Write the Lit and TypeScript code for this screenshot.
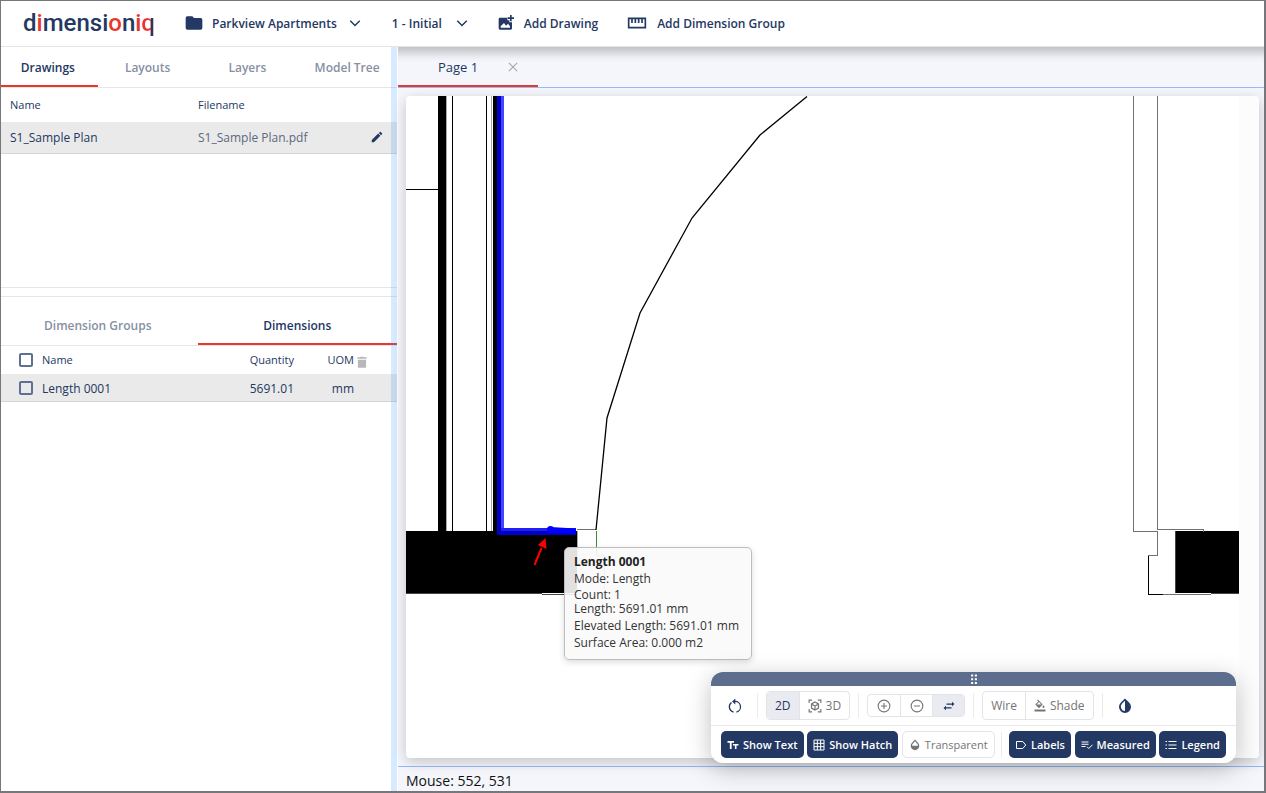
import { LitElement, html, css, svg } from "lit";
import { customElement, state } from "lit/decorators.js";

const shapes = {
  folder: svg`<path d="M10 4H4a2 2 0 0 0-2 2v12a2 2 0 0 0 2 2h16a2 2 0 0 0 2-2V8a2 2 0 0 0-2-2h-8z"/>`,
  chevron: svg`<path d="M2.500 7.500l9.500 9.500 9.500-9.500" fill="none" stroke="currentColor" stroke-width="3"/>`,
  addImage: svg`<path fill-rule="evenodd" d="M3 4h11v4h3v3h4v9a2 2 0 0 1-2 2H3a2 2 0 0 1-2-2V6a2 2 0 0 1 2-2zM4 19h14v-2l-3-4-3 3-3-4-5 5z"/><path d="M18 0h2.500v3.500H24V6h-3.500v3.500H18V6h-3.500V3.500H18z"/>`,
  ruler: svg`<path d="M2 6.500h20v11H2zM6 6v6M10 6v6M14 6v6M18 6v6" fill="none" stroke="currentColor" stroke-width="2"/>`,
  close: svg`<path d="M2 2l20 20M22 2L2 22" fill="none" stroke="currentColor" stroke-width="2.600"/>`,
  pencil: svg`<path d="M3 17.250V21h3.750L17.800 9.940l-3.750-3.750zM20.710 7.040a1 1 0 0 0 0-1.410l-2.340-2.340a1 1 0 0 0-1.410 0l-1.830 1.830 3.750 3.750z"/>`,
  trash: svg`<path d="M5 8h14v12a2 2 0 0 1-2 2H7a2 2 0 0 1-2-2zM15.500 4l-1-1h-5l-1 1H4v2.500h16V4z"/>`,
  rotate: svg`<path d="M6 6A9.300 9.300 0 0 0 9.500 22.500M14.500 22.500A9.300 9.300 0 0 0 12 4.200" fill="none" stroke="currentColor" stroke-width="2.200"/><path d="M12.500-1v10.500L7 4.300z"/>`,
  cube: svg`<path d="M2 7V2h5M17 2h5v5M22 17v5h-5M7 22H2v-5M12 5l6 3.500v7L12 19l-6-3.500v-7zM6 8.500l6 3.500 6-3.500M12 12v7" fill="none" stroke="currentColor" stroke-width="2"/>`,
  plus: svg`<circle cx="12" cy="12" r="10" fill="none" stroke="currentColor" stroke-width="1.900"/><path d="M12 7v10M7 12h10" stroke="currentColor" stroke-width="1.900"/>`,
  minus: svg`<circle cx="12" cy="12" r="10" fill="none" stroke="currentColor" stroke-width="1.900"/><path d="M7 12h10" stroke="currentColor" stroke-width="1.900"/>`,
  swap: svg`<path d="M7 7h11V3.500l5 4.500-5 4.500V9.300H7zM17 14.700H6V11.500L1 16l5 4.500V17h11z"/>`,
  bucket: svg`<path fill-rule="evenodd" d="M16.560 7.940L7.620-1 6.210.41l2.380 2.380-5.150 5.150a1.500 1.500 0 0 0 0 2.120l5.500 5.500a1.500 1.500 0 0 0 2.120 0l5.500-5.500a1.500 1.500 0 0 0 0-2.120zM5.210 9L10 4.210 14.790 9zM19 10.500s-2 2.170-2 3.500a2 2 0 0 0 4 0c0-1.330-2-3.500-2-3.500zM1 19h22v4H1z"/>`,
  contrast: svg`<path fill-rule="evenodd" d="M12 .8l6.500 6.500a9 9 0 1 1-13 0zM12 4v15.500a6.500 6.500 0 0 1-4.700-10.700z"/>`,
  drop: svg`<path fill-rule="evenodd" d="M12 1l6 6.500a8.600 8.600 0 1 1-12 0zM6 13.500h12c0-1.700-.5-3-1.600-4.200L12 4.600 7.600 9.300C6.500 10.500 6 11.800 6 13.500z"/>`,
  type: svg`<path d="M1 4h13v3.400H9.300V20H5.700V7.400H1zM12 10h11v3h-4v7h-3.200v-7H12z"/>`,
  grid: svg`<path d="M2 2h20v20H2zM8.700 2v20M15.300 2v20M2 8.700h20M2 15.300h20" fill="none" stroke="currentColor" stroke-width="2"/>`,
  tag: svg`<path d="M3 5h12.500l6 7-6 7H3z" fill="none" stroke="currentColor" stroke-width="2" stroke-linejoin="round"/>`,
  check: svg`<path d="M1 6h14M1 10.500h14M1 15h8M12 15.500l3.500 3.500L23 11.500" fill="none" stroke="currentColor" stroke-width="2"/>`,
  list: svg`<path d="M1 5h3M1 12h3M1 19h3M7 5h16M7 12h16M7 19h16" fill="none" stroke="currentColor" stroke-width="2"/>`,
  grip: svg`<path d="M5 1h5v5H5zM14 1h5v5h-5zM5 10h5v5H5zM14 10h5v5h-5zM5 19h5v5H5zM14 19h5v5h-5z"/>`,
};

const icon = (name: keyof typeof shapes, size = "s12") =>
  html`<svg class="icon ${size}" viewBox="0 0 24 24" fill="currentColor" aria-hidden="true">${shapes[name]}</svg>`;

const base = css`
  *, *::before, *::after { box-sizing: border-box; }
  button { font: inherit; color: inherit; background: none; border: 0; padding: 0; margin: 0; display: flex; align-items: center; white-space: nowrap; }
  .icon { display: block; flex: none; overflow: visible; }
  .s10 { width: 10px; height: 10px; }
  .s12 { width: 12px; height: 12px; }
  .s14 { width: 14px; height: 14px; }
  .s16 { width: 16px; height: 16px; }
  .s20 { width: 20px; height: 20px; }
`;

@customElement("top-bar")
class TopBar extends LitElement {
  static styles = [base, css`
    :host { display: block; background: #fff; border-bottom: 1px solid #e4e4e4; }
    header { height: 45px; display: flex; align-items: center; padding: 0 0 1px 22px; color: #233862; font-size: 12px; font-weight: 600; }
    .logo { font: 500 24px/30px Roboto, sans-serif; width: 133px; margin-right: 28px; white-space: nowrap; }
    .red { color: #e8382c; }
    .split { color: transparent; background: linear-gradient(90deg, #e8382c 68%, #233862 68%); background-clip: text; -webkit-background-clip: text; }
    .project { gap: 8px; margin-right: 31px; }
    .project .caret { margin-left: 4px; }
    .stage { gap: 14px; margin-right: 30px; }
    .add { gap: 10px; margin-right: 29px; }
  `];
  render() {
    return html`<header>
      <div class="logo">d<span class="red">i</span>mensi<span class="red">o</span>n<span class="red">i</span><span class="split">q</span></div>
      <button class="project">${icon("folder", "s20")}<span>Parkview Apartments</span><span class="caret">${icon("chevron")}</span></button>
      <button class="stage"><span>1 - Initial</span>${icon("chevron")}</button>
      <button class="add">${icon("addImage", "s16")}<span>Add Drawing</span></button>
      <button class="add">${icon("ruler", "s20")}<span>Add Dimension Group</span></button>
    </header>`;
  }
}

@customElement("side-panel")
class SidePanel extends LitElement {
  static styles = [base, css`
    :host { display: block; position: relative; background: #fff; color: #233862; font-size: 12px; }
    .splitter { position: absolute; top: 0; right: 0; bottom: 0; width: 6px; background: #3399ff33; cursor: col-resize; }
    .tabs { display: flex; border-bottom: 1px solid #e6e6e6; overflow: hidden; font-weight: 600; color: #8790a4; }
    .tabs button { flex: 1; justify-content: center; border-bottom: 2px solid transparent; }
    .tabs button:first-child { margin-left: -3px; }
    .tabs .active { color: #233862; border-color: #e8382c; }
    .top button { height: 40px; padding-top: 2px; }
    .lower button { height: 48px; padding-top: 11px; }
    .drawings { height: 200px; border-bottom: 1px solid #e6e6e6; }
    .dimensions { margin-top: 8px; border-top: 1px solid #e6e6e6; }
    table { width: 100%; border-collapse: collapse; table-layout: fixed; }
    th, td { padding: 0; text-align: left; font-weight: 400; }
    th { font-size: 11px; padding-bottom: 1px; }
    tbody tr { background: #eaeaea; border-bottom: 1px solid #d4d4d4; }
    .name { width: 197px; }
    .drawings th { height: 34px; }
    .drawings td { height: 31px; }
    .drawings th:first-child, .drawings td:first-child { padding-left: 9px; }
    .file { color: #5c6880; }
    .edit { width: 27px; }
    .dimensions th { height: 28px; }
    .dimensions td { height: 27px; padding-top: 2px; }
    .tick { width: 41px; }
    .dimensions th.tick, .dimensions td.tick { padding-left: 18px; }
    input { appearance: none; display: block; width: 14px; height: 14px; margin: 0; border: 2px solid #5f7093; border-radius: 2px; background: transparent; }
    .qty { width: 80px; }
    .unit { width: 60px; }
    .bin { width: 43px; }
    .dimensions .num { text-align: right; }
    .dimensions th.bin { padding: 3px 0 0 1px; }
    .bin button { color: #b8b8b8; }
  `];
  render() {
    return html`
      <nav class="tabs top" aria-label="Project content">
        <button class="active">Drawings</button><button>Layouts</button><button>Layers</button><button>Model Tree</button>
      </nav>
      <section class="drawings">
        <table>
          <colgroup><col class="name" /><col /><col class="edit" /></colgroup>
          <thead><tr><th>Name</th><th>Filename</th><th></th></tr></thead>
          <tbody><tr><td>S1_Sample Plan</td><td class="file">S1_Sample Plan.pdf</td><td><button aria-label="Edit drawing">${icon("pencil", "s14")}</button></td></tr></tbody>
        </table>
      </section>
      <section class="dimensions">
        <nav class="tabs lower" aria-label="Dimension content">
          <button>Dimension Groups</button><button class="active">Dimensions</button>
        </nav>
        <table>
          <colgroup><col class="tick" /><col /><col class="qty" /><col class="unit" /><col class="bin" /></colgroup>
          <thead><tr>
            <th class="tick"><input type="checkbox" aria-label="Select all" /></th><th>Name</th><th class="num">Quantity</th><th class="num">UOM</th>
            <th class="bin"><button aria-label="Delete">${icon("trash", "s14")}</button></th>
          </tr></thead>
          <tbody><tr>
            <td class="tick"><input id="row1" type="checkbox" /></td><td><label for="row1">Length 0001</label></td><td class="num">5691.01</td><td class="num">mm</td><td></td>
          </tr></tbody>
        </table>
      </section>
      <div class="splitter"></div>`;
  }
}

@customElement("plan-canvas")
class PlanCanvas extends LitElement {
  static styles = [base, css`
    :host { display: block; position: relative; background: #fff; border-radius: 4px; box-shadow: 0 4px 14px #00000033; }
    .plan { position: absolute; inset: 0; width: 100%; height: 100%; border-radius: 4px; }
    .tip { position: absolute; left: 158px; top: 451px; padding: 5px 12px 8px 9px; border: 1px solid #bdbdbd; border-radius: 5px; background: #fafafae6; box-shadow: 0 2px 6px #00000026; color: #333; font-size: 12px; line-height: 17px; white-space: nowrap; }
    .tip strong { display: block; color: #222; }
    .tip p { margin: 0; }
    .tip .tight { line-height: 14px; margin: 1px 0; }
    .tip .tight + .tight { margin-top: -1px; }
  `];
  render() {
    return html`
      <svg class="plan" viewBox="406 96 853 662" preserveAspectRatio="xMinYMin slice" fill="none" stroke="#000" shape-rendering="crispEdges" role="img" aria-label="Floor plan">
        <path d="M1239 96h20v662h-20z" fill="#fcfcfc" stroke="none" />
        <g fill="#000" stroke="none">
          <path d="M438 96h8v435h-8zM493 96h5v435h-5zM406 531h171v62H406zM1176 531h63v62h-63z" />
          <path d="M446 96h1v435h-1zM491 96h1v435h-1zM577 531h1v31h-1z" fill="#aaa" />
        </g>
        <path d="M406 189.500h32M452.500 96v435M486.500 96v435" />
        <path d="M1148.500 555v39h15M1203 531.500h36" />
        <path d="M406 593.500h136M1175.500 531v62M1211 593.500h28M542 594.500h35" stroke="#444" />
        <path d="M1133 96v435.500h24v24h-9M1157.500 96v433.500h46v2M1163 594.500h48M577 529.500h19" stroke="#707070" />
        <path d="M596.500 531v25" stroke="#3d8b3d" />
        <path d="M596.500 555.500h8v39" stroke="#999" />
        <path d="M807 96.500L760 135l-68 83-52 95-33 105-11 112" stroke-width="1.300" shape-rendering="auto" />
        <g stroke="none">
          <path d="M501 96h3v433h-3z" fill="#4343ff" /><path d="M501 528h75v3h-75z" fill="#2020f0" />
          <path d="M497 96h4v435h75v4h-79z" fill="#0000c8" />
        </g>
        <g shape-rendering="auto">
          <circle cx="550.500" cy="529.500" r="3.600" fill="#00f" stroke="none" />
          <path d="M550 527l26 1.500v5l-26-.5z" fill="#00f" stroke="none" />
          <path d="M534.500 565l7-17" stroke="#f00" stroke-width="2" />
          <path d="M545.500 538l-7.500 7 8.500 4z" fill="#f00" stroke="none" />
        </g>
      </svg>
      <div class="tip" role="tooltip">
        <strong>Length 0001</strong>
        <p>Mode: Length</p>
        <p class="tight">Count: 1</p>
        <p class="tight">Length: 5691.01 mm</p>
        <p>Elevated Length: 5691.01 mm</p>
        <p>Surface Area: 0.000 m2</p>
      </div>`;
  }
}

@customElement("view-tools")
class ViewTools extends LitElement {
  static styles = [base, css`
    :host { display: block; border-radius: 12px; overflow: hidden; background: #fffffff5; box-shadow: 0 6px 24px #00000040; color: #757575; font-size: 12px; font-weight: 500; }
    .grip { height: 14px; display: flex; align-items: center; justify-content: center; background: #5d6d8e; color: #fff; }
    .row { display: flex; align-items: center; padding: 0 10px; }
    .view { height: 40px; border-bottom: 1px solid #e8e8e8; }
    .toggles { height: 37px; justify-content: space-between; font-size: 11px; font-weight: 600; }
    .round { width: 28px; height: 28px; justify-content: center; color: #233862; }
    .sep { width: 1px; height: 25px; margin: 0 8px; background: #ebebee; flex: none; }
    .toggles .sep { margin: 0 3px; }
    .group { display: flex; border: 1px solid #e2e4ea; border-radius: 4px; overflow: hidden; }
    .group button { height: 27px; gap: 4px; padding: 0 8px; justify-content: center; }
    .group button + button { border-left: 1px solid #e2e4ea; }
    .group.small button { height: 21px; width: 32px; padding: 0; }
    .group .on { background: #e9ebf0; color: #233862; }
    .pill { height: 27px; padding: 0 6px; gap: 4px; border-radius: 5px; color: #fff; background: #233862; }
    .pill.off { color: #757575; background: transparent; border: 1px solid #e2e4ea; font-weight: 500; }
  `];
  render() {
    return html`
      <div class="grip">${icon("grip", "s10")}</div>
      <div class="row view">
        <button class="round" aria-label="Reset rotation">${icon("rotate", "s14")}</button><span class="sep"></span>
        <div class="group"><button class="on">2D</button><button>${icon("cube", "s14")}3D</button></div><span class="sep"></span>
        <div class="group small"><button aria-label="Zoom in">${icon("plus", "s14")}</button><button aria-label="Zoom out">${icon("minus", "s14")}</button><button class="on" aria-label="Pan">${icon("swap")}</button></div><span class="sep"></span>
        <div class="group"><button>Wire</button><button>${icon("bucket")}Shade</button></div><span class="sep"></span>
        <button class="round" aria-label="Contrast">${icon("contrast", "s16")}</button>
      </div>
      <div class="row toggles">
        <button class="pill">${icon("type")}Show Text</button>
        <button class="pill">${icon("grid")}Show Hatch</button>
        <button class="pill off">${icon("drop")}Transparent</button>
        <span class="sep"></span>
        <button class="pill">${icon("tag")}Labels</button>
        <button class="pill">${icon("check")}Measured</button>
        <button class="pill">${icon("list")}Legend</button>
      </div>`;
  }
}

@customElement("app-root")
class AppRoot extends LitElement {
  @state() private pointer = [552, 531];
  static styles = [base, css`
    :host { display: flex; flex-direction: column; height: 100vh; box-sizing: border-box; border: 1px solid #77777b; border-bottom-width: 2px; border-right-width: 2px; background: #fff; font-family: "Open Sans", "Noto Sans", sans-serif; overflow: hidden; }
    .body { flex: 1; min-height: 0; display: grid; grid-template-columns: 396px 1fr; column-gap: 1px; }
    main { position: relative; min-width: 0; display: flex; flex-direction: column; background: #f4f6fb; box-shadow: inset 0 14px 10px -8px #00000038; }
    .pages { height: 41px; flex: none; border-bottom: 1px solid #94bdf8; }
    .page { display: flex; align-items: center; justify-content: space-between; width: 140px; height: 40px; padding: 2px 20px 0 40px; border-bottom: 2px solid #e8382c; color: #233862; font-size: 13px; }
    .page .close { color: #a5a5aa; }
    plan-canvas { flex: 1; margin: 8px 5px 8px 8px; }
    .status { flex: none; height: 25px; padding-left: 8px; border-top: 1px solid #94bdf8; font-size: 14px; font-weight: 500; line-height: 27px; color: #111; }
    view-tools { position: absolute; right: 28px; bottom: 28px; width: 525px; }
  `];
  render() {
    return html`
      <top-bar></top-bar>
      <div class="body">
        <side-panel></side-panel>
        <main>
          <div class="pages"><div class="page"><span>Page 1</span><button class="close" aria-label="Close page">${icon("close", "s10")}</button></div></div>
          <plan-canvas></plan-canvas>
          <footer class="status">Mouse: ${this.pointer.join(", ")}</footer>
          <view-tools></view-tools>
        </main>
      </div>`;
  }
}
